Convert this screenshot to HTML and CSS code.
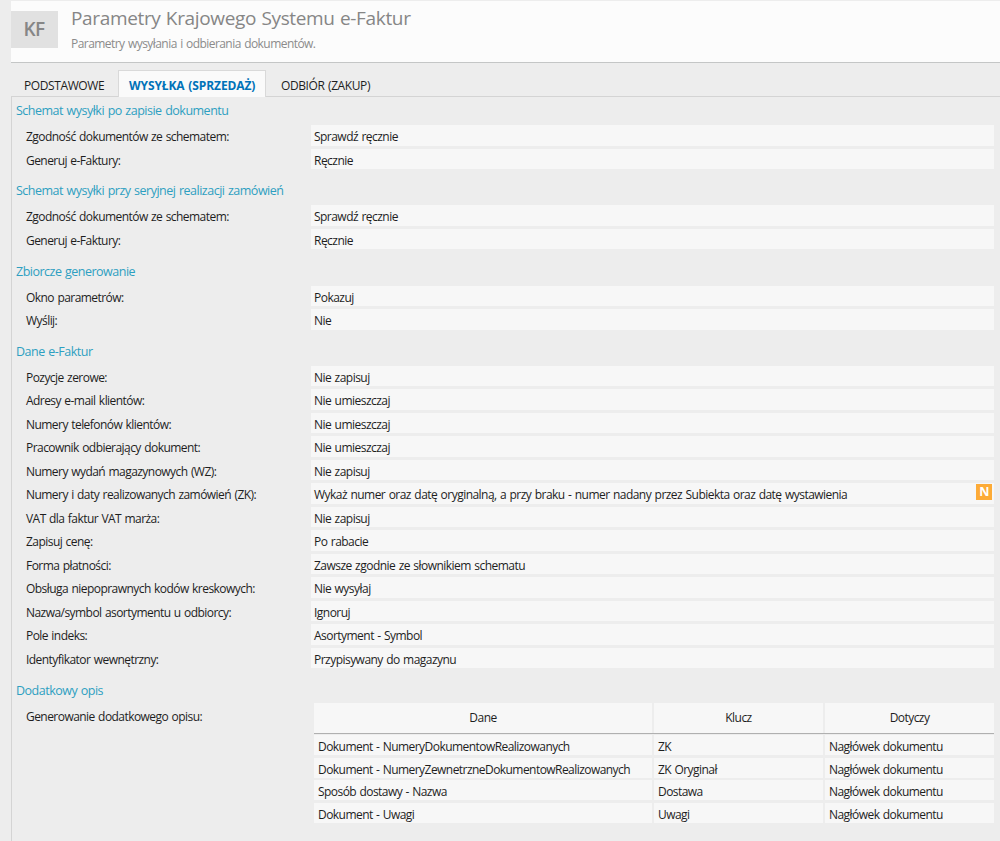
FILE: index.html
```html
<!DOCTYPE html>
<html lang="pl">
<head>
    <meta charset="UTF-8">
    <meta name="viewport" content="width=device-width, initial-scale=1.0">
    <title>Parametry Krajowego Systemu e-Faktur</title>
    <link rel="stylesheet" href="styles.css">
</head>
<body>

<div class="window">
    <header class="header">
        <div class="badge">KF</div>
        <div>
            <h1>Parametry Krajowego Systemu e-Faktur</h1>
            <p class="subtitle">Parametry wysyłania i odbierania dokumentów.</p>
        </div>
    </header>

    <nav class="tabs">
        <div class="tab tab-first"><span>PODSTAWOWE</span></div>
        <div class="tab active"><span>WYSYŁKA (SPRZEDAŻ)</span></div>
        <div class="tab tab-last"><span>ODBIÓR (ZAKUP)</span></div>
    </nav>

    <main class="panel">
        <section>
            <h2>Schemat wysyłki po zapisie dokumentu</h2>
            <div class="row"><label>Zgodność dokumentów ze schematem:</label><div class="value"><span>Sprawdź ręcznie</span></div></div>
            <div class="row"><label>Generuj e-Faktury:</label><div class="value"><span>Ręcznie</span></div></div>
        </section>

        <section>
            <h2>Schemat wysyłki przy seryjnej realizacji zamówień</h2>
            <div class="row"><label>Zgodność dokumentów ze schematem:</label><div class="value"><span>Sprawdź ręcznie</span></div></div>
            <div class="row"><label>Generuj e-Faktury:</label><div class="value"><span>Ręcznie</span></div></div>
        </section>

        <section>
            <h2>Zbiorcze generowanie</h2>
            <div class="row"><label>Okno parametrów:</label><div class="value"><span>Pokazuj</span></div></div>
            <div class="row"><label>Wyślij:</label><div class="value"><span>Nie</span></div></div>
        </section>

        <section>
            <h2>Dane e-Faktur</h2>
            <div class="row"><label>Pozycje zerowe:</label><div class="value"><span>Nie zapisuj</span></div></div>
            <div class="row"><label>Adresy e-mail klientów:</label><div class="value"><span>Nie umieszczaj</span></div></div>
            <div class="row"><label>Numery telefonów klientów:</label><div class="value"><span>Nie umieszczaj</span></div></div>
            <div class="row"><label>Pracownik odbierający dokument:</label><div class="value"><span>Nie umieszczaj</span></div></div>
            <div class="row"><label>Numery wydań magazynowych (WZ):</label><div class="value"><span>Nie zapisuj</span></div></div>
            <div class="row"><label>Numery i daty realizowanych zamówień (ZK):</label><div class="value"><span>Wykaż numer oraz datę oryginalną, a przy braku - numer nadany przez Subiekta oraz datę wystawienia</span><b class="marker">N</b></div></div>
            <div class="row"><label>VAT dla faktur VAT marża:</label><div class="value"><span>Nie zapisuj</span></div></div>
            <div class="row"><label>Zapisuj cenę:</label><div class="value"><span>Po rabacie</span></div></div>
            <div class="row"><label>Forma płatności:</label><div class="value"><span>Zawsze zgodnie ze słownikiem schematu</span></div></div>
            <div class="row"><label>Obsługa niepoprawnych kodów kreskowych:</label><div class="value"><span>Nie wysyłaj</span></div></div>
            <div class="row"><label>Nazwa/symbol asortymentu u odbiorcy:</label><div class="value"><span>Ignoruj</span></div></div>
            <div class="row"><label>Pole indeks:</label><div class="value"><span>Asortyment - Symbol</span></div></div>
            <div class="row"><label>Identyfikator wewnętrzny:</label><div class="value"><span>Przypisywany do magazynu</span></div></div>
        </section>

        <section>
            <h2>Dodatkowy opis</h2>
            <div class="row row-table">
                <label>Generowanie dodatkowego opisu:</label>
                <div class="table">
                    <div class="table-row table-head"><div>Dane</div><div>Klucz</div><div>Dotyczy</div></div>
                    <div class="table-row"><div>Dokument - NumeryDokumentowRealizowanych</div><div>ZK</div><div>Nagłówek dokumentu</div></div>
                    <div class="table-row"><div>Dokument - NumeryZewnetrzneDokumentowRealizowanych</div><div>ZK Oryginał</div><div>Nagłówek dokumentu</div></div>
                    <div class="table-row"><div>Sposób dostawy - Nazwa</div><div>Dostawa</div><div>Nagłówek dokumentu</div></div>
                    <div class="table-row"><div>Dokument - Uwagi</div><div>Uwagi</div><div>Nagłówek dokumentu</div></div>
                </div>
            </div>
        </section>
    </main>
</div>

</body>
</html>
```

FILE: styles.css
```css
* {
    box-sizing: border-box;
}
body {
    margin: 0;
    background-color: #ededed;
    color: #1e1e1e;
    font-family: "Open Sans", "Noto Sans", sans-serif;
    font-size: 12px;
    letter-spacing: -0.55px;
    word-spacing: 0.8px;
    white-space: nowrap;
    overflow: hidden;
}
.window {
    height: 841px;
    padding-top: 1px;
    padding-left: 11px;
    display: flex;
    flex-direction: column;
}
.header {
    display: flex;
    height: 62px;
    background-color: #fcfcfc;
    border-bottom: 1px solid #c4c6c6;
}
.badge {
    width: 47px;
    height: 37px;
    margin: 10px 13px 0 0;
    padding-right: 1px;
    background-color: #e1e1e1;
    color: #868686;
    font-size: 19px;
    font-weight: 600;
    line-height: 36px;
    text-align: center;
}
h1, h2, p {
    margin: 0;
    font-weight: normal;
}
h1 {
    padding-top: 4px;
    color: #868686;
    font-size: 19px;
    line-height: 26px;
    letter-spacing: -0.35px;
}
.subtitle {
    padding-top: 3px;
    color: #8b8b8b;
    line-height: 19px;
}
.tabs {
    display: flex;
    height: 33px;
    padding-top: 7px;
}
.tab {
    height: 26px;
    line-height: 31px;
    letter-spacing: -0.4px;
}
.tab-first {
    width: 107px;
    padding-left: 13px;
}
.tab.active {
    z-index: 1;
    width: 148px;
    height: 27px;
    padding-left: 10px;
    background-color: #fafafa;
    border: 1px solid #d9d9d9;
    border-bottom: none;
    color: #0072b8;
    font-weight: bold;
    line-height: 29px;
    letter-spacing: -0.1px;
}
.tab-last {
    padding-left: 15px;
}
.panel {
    flex: 1;
    border-top: 1px solid #d4d4d4;
    border-left: 1px solid #d4d4d4;
}
section {
    margin-bottom: 5.3px;
}
h2 {
    height: 28px;
    padding-left: 4px;
    color: #2d9fc1;
    font-size: 12.5px;
    line-height: 28px;
    letter-spacing: -0.5px;
}
.row {
    display: flex;
    height: 23.5px;
    padding-right: 6px;
}
.row label {
    width: 299px;
    padding-left: 14px;
    line-height: 23px;
}
.value {
    display: flex;
    flex: 1;
    justify-content: space-between;
    height: 20.5px;
    padding: 0 2px 0 3px;
    background-color: #f7f7f7;
    line-height: 24.5px;
    letter-spacing: -0.53px;
}
.marker {
    width: 16px;
    height: 16px;
    margin-top: 1px;
    background-color: #fdab37;
    color: #fff;
    font-size: 12.5px;
    line-height: 16px;
    text-align: center;
}
.row-table label {
    width: 302px;
}
.table {
    flex: 1;
    margin-top: -1.8px;
}
.table-row {
    display: grid;
    grid-template-columns: 2fr 1fr 1fr;
    gap: 2px;
    height: 22.5px;
    line-height: 23.5px;
}
.table-row div {
    height: 20px;
    padding-left: 4px;
    background-color: #f7f7f7;
}
.table-head {
    height: 31px;
    margin-bottom: 1.5px;
    border-bottom: 1px solid #b0b0b0;
    line-height: 29px;
    text-align: center;
}
.table-head div {
    height: 30px;
    padding: 0;
}
```
